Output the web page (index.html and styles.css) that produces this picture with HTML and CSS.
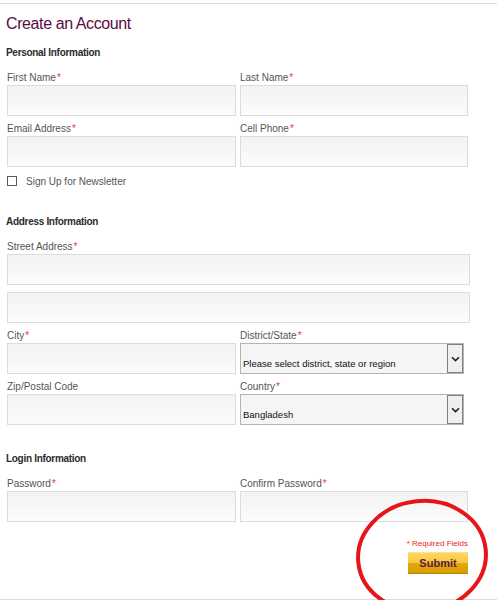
FILE: index.html
```html
<!DOCTYPE html>
<html lang="en">
<head>
<meta charset="utf-8">
<title>Create an Account</title>
<link rel="stylesheet" href="styles.css">
</head>
<body>
<div class="page">
  <h1 class="title">Create an Account</h1>

  <section class="section section-first">
    <h2 class="section-title">Personal Information</h2>
    <div class="grid">
      <div class="field">
        <label class="label">First Name<span class="req">*</span></label>
        <input class="input" type="text">
      </div>
      <div class="field">
        <label class="label">Last Name<span class="req">*</span></label>
        <input class="input" type="text">
      </div>
      <div class="field">
        <label class="label">Email Address<span class="req">*</span></label>
        <input class="input" type="text">
      </div>
      <div class="field">
        <label class="label">Cell Phone<span class="req">*</span></label>
        <input class="input" type="text">
      </div>
    </div>
    <label class="check"><span class="check-box"></span>Sign Up for Newsletter</label>
  </section>

  <section class="section section-address">
    <h2 class="section-title">Address Information</h2>
    <div class="field">
      <label class="label">Street Address<span class="req">*</span></label>
      <input class="input input-wide" type="text">
      <input class="input input-wide input-extra" type="text">
    </div>
    <div class="grid grid-address">
      <div class="field">
        <label class="label">City<span class="req">*</span></label>
        <input class="input" type="text">
      </div>
      <div class="field">
        <label class="label">District/State<span class="req">*</span></label>
        <div class="select">
          <span class="select-value">Please select district, state or region</span>
          <span class="select-arrow"><svg width="9" height="6" viewBox="0 0 9 6"><path d="M1 1.2 L4.5 4.6 L8 1.2" fill="none" stroke="#1a1a33" stroke-width="1.5"/></svg></span>
        </div>
      </div>
      <div class="field">
        <label class="label">Zip/Postal Code</label>
        <input class="input" type="text">
      </div>
      <div class="field">
        <label class="label">Country<span class="req">*</span></label>
        <div class="select">
          <span class="select-value">Bangladesh</span>
          <span class="select-arrow"><svg width="9" height="6" viewBox="0 0 9 6"><path d="M1 1.2 L4.5 4.6 L8 1.2" fill="none" stroke="#1a1a33" stroke-width="1.5"/></svg></span>
        </div>
      </div>
    </div>
  </section>

  <section class="section section-login">
    <h2 class="section-title">Login Information</h2>
    <div class="grid">
      <div class="field">
        <label class="label">Password<span class="req">*</span></label>
        <input class="input" type="password">
      </div>
      <div class="field">
        <label class="label">Confirm Password<span class="req">*</span></label>
        <input class="input" type="password">
      </div>
    </div>
  </section>

  <div class="actions">
    <span class="required-note">* Required Fields</span>
    <button class="submit" type="button">Submit</button>
  </div>

  <svg class="annotation" width="142" height="104" viewBox="0 0 142 104">
    <ellipse cx="67" cy="59" rx="64" ry="55" transform="rotate(-6 67 59)" fill="none" stroke="#e8141c" stroke-width="4"/>
  </svg>
</div>
</body>
</html>
```

FILE: styles.css
```css
* {
  box-sizing: border-box;
}

html, body {
  margin: 0;
  padding: 0;
  background: #fff;
  overflow: hidden;
}

body {
  font-family: "Liberation Sans", Arial, sans-serif;
  color: #333;
}

.page {
  position: relative;
  margin-top: 3px;
  height: 597px;
  border-top: 1px solid #dcdcdc;
  border-bottom: 1px solid #dcdcdc;
  padding: 8px 0 0 7px;
}

.title {
  margin: 0 0 0 -1px;
  font-size: 16px;
  line-height: 24px;
  font-weight: normal;
  letter-spacing: -0.4px;
  color: #5a0a42;
}

.section-first {
  margin-top: 10px;
}

.section-address {
  margin-top: 27px;
}

.section-login {
  margin-top: 27px;
}

.section-title {
  margin: 0 0 10px -1px;
  font-size: 10px;
  line-height: 14px;
  font-weight: bold;
  letter-spacing: -0.3px;
  color: #2b2b2b;
}

.grid {
  display: grid;
  grid-template-columns: 229px 228px;
  column-gap: 4px;
  row-gap: 5px;
}

.grid-address {
  margin-top: 5px;
}

.field {
  display: flex;
  flex-direction: column;
  align-items: flex-start;
}

.label {
  display: block;
  padding-top: 1px;
  font-size: 10px;
  line-height: 13px;
  margin-bottom: 1px;
  color: #555;
}

.req {
  margin-left: 1px;
  color: #ee3a1e;
}

.input {
  display: block;
  width: 100%;
  height: 31px;
  margin: 0;
  padding: 0 4px;
  border: 1px solid #dcdcdc;
  border-radius: 0;
  background: linear-gradient(to bottom, #f3f3f3 0%, #f7f7f7 50%, #fcfcfc 100%);
  font-family: inherit;
  font-size: 11px;
  outline: none;
}

.input-wide {
  width: 463px;
}

.input-extra {
  margin-top: 7px;
}

.check {
  display: flex;
  align-items: center;
  margin-top: 7px;
  height: 14px;
  font-size: 10px;
  color: #555;
}

.check-box {
  width: 10px;
  height: 10px;
  margin-right: 9px;
  border: 1px solid #5a5a5a;
  background: #fff;
}

.select {
  display: flex;
  align-items: stretch;
  width: 224px;
  height: 31px;
  border: 1px solid #b4b4b4;
  background: #f5f5f5;
}

.select-value {
  flex: 1;
  align-self: flex-end;
  padding: 0 0 3px 2px;
  font-size: 9.5px;
  line-height: 12px;
  color: #111;
}

.select-arrow {
  display: flex;
  align-items: center;
  justify-content: center;
  width: 16px;
  border: 1px solid #808080;
  background: #efefef;
}

.actions {
  display: flex;
  flex-direction: column;
  align-items: flex-end;
  width: 461px;
  margin-top: 17px;
}

.required-note {
  font-size: 8px;
  line-height: 10px;
  color: #ee2222;
}

.submit {
  margin-top: 3px;
  width: 60px;
  height: 22px;
  padding: 0;
  border: 0;
  border-top: 1px solid #fde08a;
  border-bottom: 1px solid #b98600;
  background: linear-gradient(to bottom, #fdd862 0%, #f7c83c 48%, #e3aa0c 52%, #d89c00 100%);
  font-family: inherit;
  font-size: 11px;
  font-weight: bold;
  color: #5a1848;
  cursor: pointer;
}

.annotation {
  position: absolute;
  left: 355px;
  top: 493px;
}
```
